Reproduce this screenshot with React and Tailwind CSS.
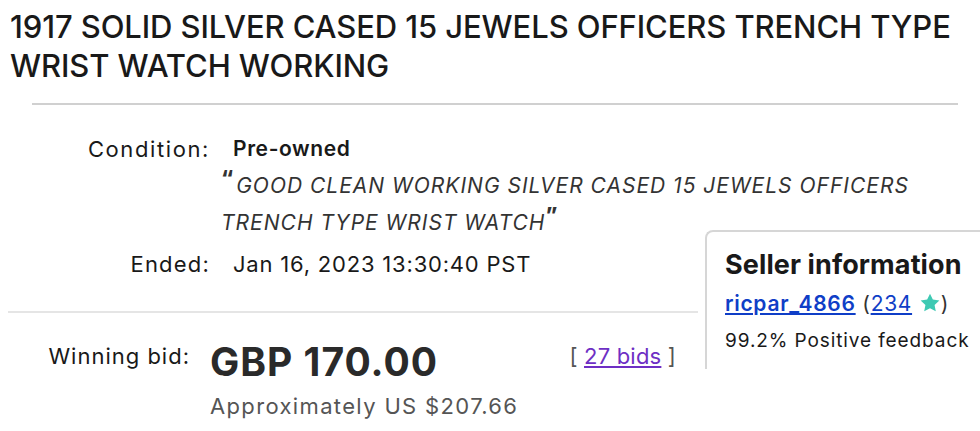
export default function App() {
  return (
    <div className="w-[980px] h-[431px] overflow-hidden bg-white text-[#191919] font-['Inter',sans-serif]">
      {/* ---------- TITLE ---------- */}
      <h1 className="pl-[10px] pt-[7px] text-[31px] leading-[39px] font-medium tracking-[-0.1px]">
        1917 SOLID SILVER CASED 15 JEWELS OFFICERS TRENCH TYPE
        <br />
        WRIST WATCH WORKING
      </h1>
      <div className="ml-[32px] mt-[18px] w-[926px] border-t-2 border-[#d0d0d0]" />

      {/* ---------- CONDITION ---------- */}
      <div className="mt-[30px] flex">
        <div className="w-[210px] text-right text-[22px] leading-[28px] tracking-[1.6px]">Condition:</div>
        <div className="pl-[23px] text-[21px] leading-[28px] font-semibold tracking-[0.6px]">Pre-owned</div>
      </div>
      <p className="ml-[221px] mt-[4px] text-[21px] leading-[37px] italic text-[#333] tracking-[1px]">
        <span className="not-italic font-extrabold text-[21px] leading-none align-[7px] mr-[2px]">“</span>
        GOOD CLEAN WORKING SILVER CASED 15 JEWELS OFFICERS
        <br />
        TRENCH TYPE WRIST WATCH
        <span className="not-italic font-extrabold text-[21px] leading-none align-[7px]">”</span>
      </p>

      {/* ---------- ENDED + SELLER ---------- */}
      <div className="flex items-start">
        <div className="w-[698px]">
          <div className="mt-[9px] flex">
            <div className="w-[210px] text-right text-[22px] leading-[28px] tracking-[1.2px]">Ended:</div>
            <div className="pl-[23px] text-[22px] leading-[28px] tracking-[0.8px]">Jan 16, 2023 13:30:40 PST</div>
          </div>
          <div className="ml-[8px] mt-[33px] border-t-2 border-[#e5e5e5]" />
          <div className="mt-[29px] flex">
            <div className="w-[190px] text-right text-[22px] leading-[28px] tracking-[1px]">Winning bid:</div>
            <div className="pl-[20px]">
              <div className="text-[39px] leading-[40px] font-bold text-[#2a2a2a] tracking-[1px]">GBP 170.00</div>
              <div className="mt-[10px] text-[22px] leading-[28px] text-[#555] tracking-[1.35px]">Approximately US $207.66</div>
            </div>
            <div className="ml-auto mr-[22px] text-[22px] leading-[28px] text-[#555] tracking-[0.2px]">
              [ <a href="#" className="text-[#6e2fc4] underline">27 bids</a> ]
            </div>
          </div>
        </div>

        <div className="ml-[7px] -mt-[11px] flex-1 h-[139px] rounded-tl-[8px] border-l-2 border-t-2 border-[#d6d6d6] pl-[18px] pt-[17px]">
          <div className="text-[27px] leading-[32px] font-bold tracking-[0.1px]">Seller information</div>
          <div className="mt-[9px] text-[21px] leading-[28px] text-[#333] tracking-[0.7px]">
            <a href="#" className="text-[#0f3ec7] underline font-semibold">ricpar_4866</a>{" "}
            (<a href="#" className="text-[#0f3ec7] underline">234</a>{" "}
            <svg viewBox="0 0 24 24" className="inline-block w-[22px] h-[22px] align-[-3px]">
              <path d="M12 1.8l3.1 6.5 7.1.9-5.2 4.9 1.3 7-6.3-3.4-6.3 3.4 1.3-7L1.8 9.2l7.1-.9z" fill="#3ec9b3" />
            </svg>
            )
          </div>
          <div className="mt-[10px] text-[19px] leading-[26px] tracking-[0.9px]">99.2% Positive feedback</div>
        </div>
      </div>
    </div>
  );
}
